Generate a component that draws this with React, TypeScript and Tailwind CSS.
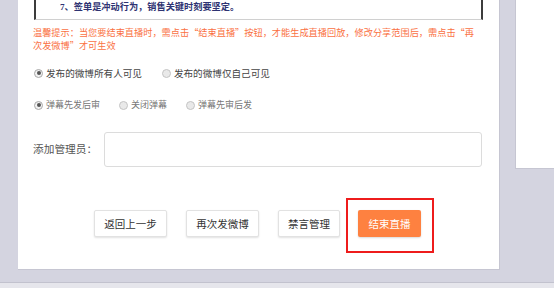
const font = { fontFamily: '"Noto Sans CJK SC", "Noto Sans", sans-serif' };

function Radio({ checked, label, small }: { checked?: boolean; label: string; small?: boolean }) {
  return (
    <label className="flex items-center gap-[3px]">
      <span
        className={
          'flex h-[9px] w-[9px] items-center justify-center rounded-full border ' +
          (checked ? 'border-[#a9a9a9] bg-[#f2f2f2]' : 'border-[#c4c4c4] bg-[#e9e9e9]')
        }
      >
        {checked && <span className="h-[4px] w-[4px] rounded-full bg-[#555]" />}
      </span>
      <span className={small ? 'text-[9px] text-[#777]' : 'text-[9.6px] text-[#444]'}>{label}</span>
    </label>
  );
}

function Btn({ children }: { children: string }) {
  return (
    <button className="flex h-[27px] w-full items-center justify-center whitespace-nowrap rounded-[2px] border border-[#e2e2e2] bg-white text-[10.5px] text-[#333] shadow-[0_1px_2px_rgba(0,0,0,0.12)]">
      {children}
    </button>
  );
}

export default function App() {
  return (
    <div className="relative h-[288px] w-[554px] overflow-hidden bg-[#d4d4e0]" style={font}>
      <div className="flex items-start">
        {/* main panel */}
        <div className="ml-[18px] flex h-[270px] w-[482px] flex-col border-r border-b border-[#c6c6d2] bg-white">
          <div className="ml-[16px] h-[20px] w-[449px] border-x-2 border-b border-x-[#3c3c3c] border-b-[#d0d0d0] pl-[24px]">
            <p
              className="mt-[1px] whitespace-nowrap text-[9.2px] font-semibold leading-[12px] text-[#2e3372]"
              style={{ fontFamily: '"Liberation Serif", "Noto Sans CJK SC", serif' }}
            >
              7、签单是冲动行为，销售关键时刻要坚定。
            </p>
          </div>

          <div className="mt-[6px] flex flex-col gap-[1px] pl-[15px] text-[9.2px] leading-[12px] text-[#fa7143]">
            <p className="whitespace-nowrap">
              温馨提示：当您要结束直播时，需点击“结束直播”按钮，才能生成直播回放，修改分享范围后，需点击“再
            </p>
            <p className="whitespace-nowrap">次发微博”才可生效</p>
          </div>

          <div className="mt-[15px] flex h-[14px] items-center gap-[20px] pl-[16px]">
            <Radio checked label="发布的微博所有人可见" />
            <Radio label="发布的微博仅自己可见" />
          </div>

          <div className="mt-[18px] flex h-[14px] items-center gap-[19px] pl-[16px]">
            <Radio checked small label="弹幕先发后审" />
            <Radio small label="关闭弹幕" />
            <Radio small label="弹幕先审后发" />
          </div>

          <div className="mt-[20px] flex items-center pl-[15px]">
            <span className="w-[71px] whitespace-nowrap text-[10.7px] text-[#555]">添加管理员：</span>
            <input className="h-[35px] w-[378px] rounded-[3px] border border-[#dcdcdc] bg-white outline-none" />
          </div>

          <div className="mt-[43px] flex items-center pl-[76px]">
            <div className="w-[73px]">
              <Btn>返回上一步</Btn>
            </div>
            <div className="ml-[19px] w-[73px]">
              <Btn>再次发微博</Btn>
            </div>
            <div className="ml-[19px] w-[62px]">
              <Btn>禁言管理</Btn>
            </div>
            <div className="relative ml-[18px]">
              <button className="flex h-[27px] w-[63px] items-center justify-center whitespace-nowrap rounded-[2px] bg-[#fe8140] text-[10.5px] text-white shadow-[0_1px_2px_rgba(0,0,0,0.15)]">
                结束直播
              </button>
              <div className="absolute -left-[12px] -top-[12px] h-[55px] w-[88px] border-2 border-[#ee1c1c]" />
            </div>
          </div>
        </div>

        {/* right panel */}
        <div className="ml-[15px] h-[169px] flex-1 border-b border-l border-[#c6c6d2] bg-white" />
      </div>

      <div className="absolute bottom-0 left-0 h-[6px] w-full border-t border-[#c2c2ce] bg-[#e6e6ec]" />
    </div>
  );
}
